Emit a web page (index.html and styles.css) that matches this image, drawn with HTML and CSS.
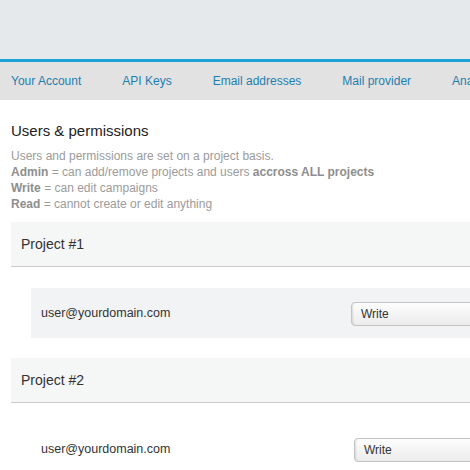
FILE: index.html
```html
<!DOCTYPE html>
<html>
<head>
<meta charset="utf-8">
<link rel="stylesheet" href="styles.css">
</head>
<body>
<div class="topbar"></div>
<nav class="nav">
  <a class="nav-item">Your Account</a>
  <a class="nav-item">API Keys</a>
  <a class="nav-item">Email addresses</a>
  <a class="nav-item">Mail provider</a>
  <a class="nav-item">Analytics</a>
</nav>
<main class="content">
  <h2 class="title">Users &amp; permissions</h2>
  <p class="desc">Users and permissions are set on a project basis.<br>
  <b>Admin</b> = can add/remove projects and users <b>accross ALL projects</b><br>
  <b>Write</b> = can edit campaigns<br>
  <b>Read</b> = cannot create or edit anything</p>

  <section class="project">
    <div class="project-head">Project #1</div>
    <div class="user-row user-row--active">
      <span class="email">user@yourdomain.com</span>
      <div class="select">Write</div>
    </div>
  </section>

  <section class="project">
    <div class="project-head">Project #2</div>
    <div class="user-row user-row--alt">
      <span class="email">user@yourdomain.com</span>
      <div class="select">Write</div>
    </div>
  </section>
</main>
</body>
</html>
```
FILE: styles.css
```css
html, body {
  margin: 0;
  padding: 0;
  background: #fff;
  overflow: hidden;
}
body {
  font-family: "Liberation Sans", Arial, sans-serif;
  color: #333;
}
.topbar {
  height: 59px;
  background: #e6e9ec;
  border-bottom: 3px solid #1ea3d6;
  background-clip: padding-box;
}
.nav {
  height: 38px;
  background: #e2e2e2;
  display: flex;
  align-items: center;
  gap: 41px;
  padding-left: 11px;
  white-space: nowrap;
  overflow: hidden;
}
.nav-item {
  color: #1d7fb1;
  font-size: 12px;
  text-decoration: none;
  flex: none;
}
.content {
  padding-left: 11px;
}
.title {
  margin: 22px 0 0;
  font-size: 15px;
  line-height: 18px;
  font-weight: normal;
  color: #222;
}
.desc {
  margin: 8px 0 0;
  font-size: 12px;
  line-height: 16px;
  color: #9b9b9b;
}
.desc b {
  color: #8e8e8e;
}
.project {
  margin-top: 10px;
}
.project + .project {
  margin-top: 20px;
}
.project-head {
  height: 44px;
  line-height: 44px;
  padding-left: 10px;
  background: #f5f6f6;
  border-bottom: 1px solid #cacaca;
  font-size: 14px;
  color: #333;
}
.user-row {
  margin: 21px 0 0 20px;
  height: 50px;
  padding-left: 10px;
  display: flex;
  align-items: center;
  overflow: hidden;
  font-size: 12.5px;
}
.user-row--active {
  background: #f2f3f4;
}
.email {
  width: 310px;
  flex: none;
  color: #333;
}
.user-row--alt .email {
  width: 313px;
}
.select {
  flex: none;
  width: 200px;
  height: 22px;
  line-height: 22px;
  margin-top: 1px;
  padding-left: 9px;
  border: 1px solid #c4c4c4;
  border-radius: 4px;
  background: linear-gradient(#fdfdfd, #ececec);
  box-shadow: inset 2px 0 2px -1px rgba(0,0,0,0.12);
  font-size: 12px;
  color: #333;
}
```
